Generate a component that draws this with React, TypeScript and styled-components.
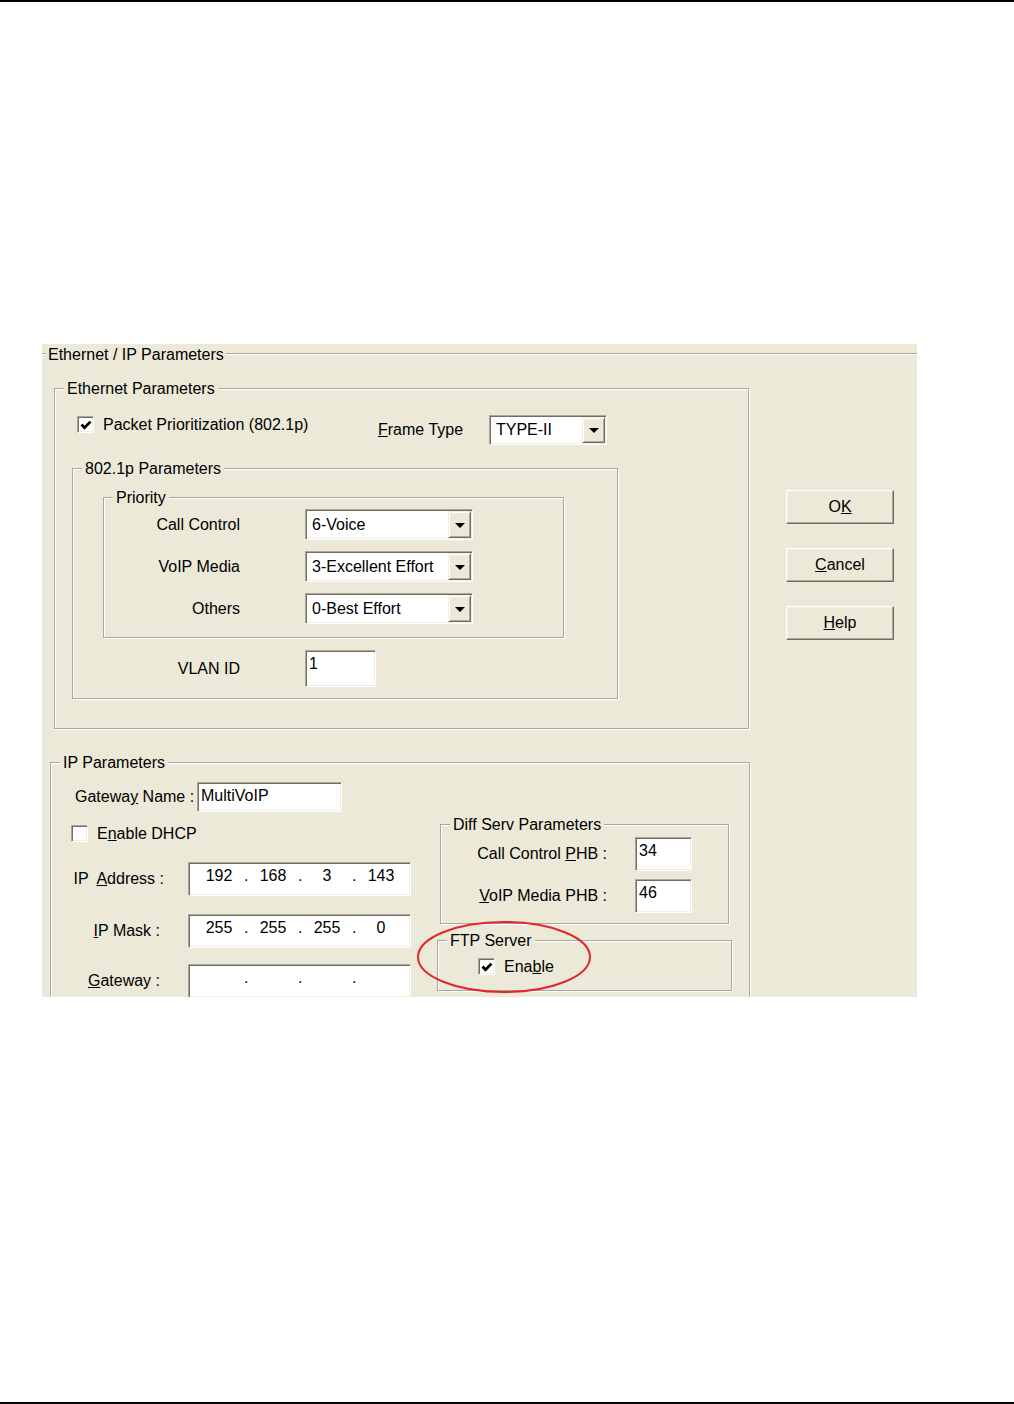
import React from 'react';
import styled, { createGlobalStyle } from 'styled-components';

// classic 3D control palette
const face = '#ECE9D8';
const shadow = '#ACA899';
const darkShadow = '#716F64';
const light = '#F1EFE2';

const GlobalStyle = createGlobalStyle`
  html, body {
    margin: 0;
    padding: 0;
    background: #fff;
  }
  body {
    font-family: "Liberation Sans", Arial, sans-serif;
  }
`;

const Page = styled.div`
  box-sizing: border-box;
  height: 1404px;
  border-top: 2px solid #000;
  border-bottom: 2px solid #000;
  padding: 342px 0 0 42px;
`;

const Dialog = styled.div`
  position: relative;
  width: 875px;
  height: 653px;
  overflow: hidden;
  background: ${face};
  color: #000;
  font: 16px/18px "Liberation Sans", Arial, sans-serif;
`;

/* etched group box */
const Group = styled.div`
  position: relative;
  box-sizing: border-box;
  border: 1px solid ${shadow};
  box-shadow: inset 1px 1px 0 #fff, 1px 1px 0 #fff;
`;

const Title = styled.span`
  position: absolute;
  top: -9px;
  left: 9px;
  padding: 0 3px;
  background: ${face};
  line-height: 18px;
  white-space: nowrap;
`;

const OuterTitle = styled(Title)`
  top: -8px;
  left: 13px;
  padding: 0 2px;
`;

const OuterGroup = styled(Group)`
  display: flex;
  align-items: flex-start;
  width: 940px;
  height: 720px;
  margin: 9px 0 0 -10px;
`;

const LeftCol = styled.div`
  display: flex;
  flex-direction: column;
  align-items: flex-start;
`;

const EthernetGroup = styled(Group)`
  width: 695px;
  height: 341px;
  margin: 34px 0 0 21px;
`;

const PacketRow = styled.div`
  display: flex;
  align-items: flex-start;
  margin-top: 26px;
`;

const CheckField = styled.label`
  box-sizing: border-box;
  display: flex;
  align-items: center;
  gap: 9px;
  line-height: 17px;
  white-space: nowrap;
`;

const PacketCheck = styled(CheckField)`
  width: 301px;
  margin: 1px 0 0 22px;
`;

const DhcpCheck = styled(CheckField)`
  margin: 13px 0 0 20px;
`;

const FtpCheck = styled(CheckField)`
  margin: 17px 0 0 40px;
`;

const Box = styled.span`
  box-sizing: border-box;
  flex: none;
  display: flex;
  align-items: center;
  justify-content: center;
  width: 17px;
  height: 17px;
  border: 1px solid;
  border-color: ${shadow} #fff #fff ${shadow};
  box-shadow: inset 1px 1px 0 ${darkShadow}, inset -1px -1px 0 ${light};
  background: #fff;
`;

const InlineField = styled.div`
  display: flex;
  align-items: center;
`;

const FieldLabel = styled.span<{ $w: number; $right?: boolean; $pr?: number }>`
  box-sizing: border-box;
  flex: none;
  width: ${(p) => p.$w}px;
  padding-right: ${(p) => p.$pr ?? 0}px;
  text-align: ${(p) => (p.$right ? 'right' : 'left')};
  white-space: pre;
`;

const Sunken = styled.div<{ $w: number; $h: number }>`
  box-sizing: border-box;
  flex: none;
  width: ${(p) => p.$w}px;
  height: ${(p) => p.$h}px;
  border: 1px solid;
  border-color: ${shadow} #fff #fff ${shadow};
  box-shadow: inset 1px 1px 0 ${darkShadow}, inset -1px -1px 0 ${light};
  background: #fff;
`;

const Combo = styled(Sunken)`
  display: flex;
  padding: 1px;
`;

const ComboText = styled.span`
  flex: 1;
  display: flex;
  align-items: center;
  padding-left: 5px;
  white-space: nowrap;
  overflow: hidden;
`;

const DropButton = styled.span`
  box-sizing: border-box;
  flex: none;
  display: flex;
  align-items: center;
  justify-content: center;
  width: 23px;
  border: 1px solid;
  border-color: ${light} ${darkShadow} ${darkShadow} ${light};
  box-shadow: inset 1px 1px 0 #fff, inset -1px -1px 0 ${shadow};
  background: ${face};

  &::after {
    content: '';
    border-left: 5px solid transparent;
    border-right: 5px solid transparent;
    border-top: 5px solid #000;
    margin-top: 1px;
  }
`;

const TextBox = styled(Sunken)`
  padding: 3px 3px 0;
  line-height: 20px;
  white-space: nowrap;
  overflow: hidden;
`;

const IpBox = styled(Sunken)`
  display: flex;
  padding: 3px 0 0 5px;
  line-height: 20px;
`;

const Octet = styled.span`
  width: 50px;
  text-align: center;
`;

const Dot = styled.span`
  width: 4px;
  text-align: center;
`;

const Group8021p = styled(Group)`
  width: 546px;
  height: 231px;
  margin: 23px 0 0 17px;
`;

const PriorityGroup = styled(Group)`
  display: flex;
  flex-direction: column;
  gap: 11px;
  width: 461px;
  height: 141px;
  margin: 28px 0 0 30px;
  padding-top: 11px;
`;

const PriorityRow = styled.div`
  display: flex;
  align-items: center;
  gap: 65px;
  height: 31px;
`;

const VlanRow = styled(PriorityRow)`
  height: auto;
  margin: 12px 0 0 31px;
`;

const IPGroup = styled(Group)`
  width: 700px;
  height: 260px;
  margin: 33px 0 0 17px;
`;

const GatewayNameRow = styled(InlineField)`
  margin: 19px 0 0 24px;
`;

const IPColumns = styled.div`
  display: flex;
  align-items: flex-start;
`;

const LeftFields = styled.div`
  display: flex;
  flex-direction: column;
  align-items: flex-start;
  width: 386px;
`;

const AddrRow = styled(InlineField)<{ $mt: number }>`
  margin-top: ${(p) => p.$mt}px;
`;

const RightBoxes = styled.div`
  display: flex;
  flex-direction: column;
  align-items: flex-start;
`;

const DiffServGroup = styled(Group)`
  display: flex;
  flex-direction: column;
  gap: 8px;
  width: 289px;
  height: 100px;
  margin: 12px 0 0 3px;
  padding-top: 12px;
`;

const PhbRow = styled(InlineField)`
  gap: 28px;
`;

const FtpGroup = styled(Group)`
  width: 295px;
  height: 51px;
  margin-top: 16px;
`;

const ButtonCol = styled.div`
  display: flex;
  flex-direction: column;
  gap: 24px;
  margin: 136px 0 0 36px;
`;

const PushButton = styled.button`
  box-sizing: border-box;
  width: 108px;
  height: 34px;
  padding: 0;
  border: 1px solid;
  border-color: #fff ${darkShadow} ${darkShadow} #fff;
  box-shadow: inset -1px -1px 0 ${shadow}, inset 1px 1px 0 ${light};
  background: ${face};
  color: #000;
  font: inherit;
`;

const Highlight = styled.svg`
  position: absolute;
  left: 374px;
  top: 576px;
  overflow: visible;
  pointer-events: none;
`;

const CheckBox = ({ checked }: { checked?: boolean }) => (
  <Box>
    {checked && (
      <svg width="12" height="12" viewBox="0 0 12 12">
        <polyline points="1.5,5.5 4.5,8.8 10.5,2.6" fill="none" stroke="#000" strokeWidth="2.8" />
      </svg>
    )}
  </Box>
);

const Select = ({ w, h, value }: { w: number; h: number; value: string }) => (
  <Combo $w={w} $h={h}>
    <ComboText>{value}</ComboText>
    <DropButton />
  </Combo>
);

const IpField = ({ octets }: { octets: string[] }) => (
  <IpBox $w={223} $h={34}>
    {octets.map((o, i) => (
      <React.Fragment key={i}>
        <Octet>{o}</Octet>
        {i < 3 && <Dot>.</Dot>}
      </React.Fragment>
    ))}
  </IpBox>
);

const priorities = [
  { label: 'Call Control', value: '6-Voice' },
  { label: 'VoIP Media', value: '3-Excellent Effort' },
  { label: 'Others', value: '0-Best Effort' },
];

export default function App() {
  return (
    <>
      <GlobalStyle />
      <Page>
        <Dialog>
          <OuterGroup>
            <OuterTitle>Ethernet / IP Parameters</OuterTitle>
            <LeftCol>
              <EthernetGroup>
                <Title>Ethernet Parameters</Title>
                <PacketRow>
                  <PacketCheck>
                    <CheckBox checked />
                    Packet Prioritization (802.1p)
                  </PacketCheck>
                  <InlineField>
                    <FieldLabel $w={111}>
                      <u>F</u>rame Type
                    </FieldLabel>
                    <Select w={118} h={30} value="TYPE-II" />
                  </InlineField>
                </PacketRow>
                <Group8021p>
                  <Title>802.1p Parameters</Title>
                  <PriorityGroup>
                    <Title>Priority</Title>
                    {priorities.map((p) => (
                      <PriorityRow key={p.label}>
                        <FieldLabel $w={136} $right>
                          {p.label}
                        </FieldLabel>
                        <Select w={168} h={31} value={p.value} />
                      </PriorityRow>
                    ))}
                  </PriorityGroup>
                  <VlanRow>
                    <FieldLabel $w={136} $right>
                      VLAN ID
                    </FieldLabel>
                    <TextBox $w={71} $h={37}>1</TextBox>
                  </VlanRow>
                </Group8021p>
              </EthernetGroup>

              <IPGroup>
                <Title>IP Parameters</Title>
                <GatewayNameRow>
                  <FieldLabel $w={122}>
                    Gatewa<u>y</u> Name :
                  </FieldLabel>
                  <TextBox $w={145} $h={30}>MultiVoIP</TextBox>
                </GatewayNameRow>
                <IPColumns>
                  <LeftFields>
                    <DhcpCheck>
                      <CheckBox />
                      <span>
                        E<u>n</u>able DHCP
                      </span>
                    </DhcpCheck>
                    <AddrRow $mt={20}>
                      <FieldLabel $w={137} $right $pr={24}>
                        IP  <u>A</u>ddress :
                      </FieldLabel>
                      <IpField octets={['192', '168', '3', '143']} />
                    </AddrRow>
                    <AddrRow $mt={18}>
                      <FieldLabel $w={137} $right $pr={28}>
                        <u>I</u>P Mask :
                      </FieldLabel>
                      <IpField octets={['255', '255', '255', '0']} />
                    </AddrRow>
                    <AddrRow $mt={16}>
                      <FieldLabel $w={137} $right $pr={28}>
                        <u>G</u>ateway :
                      </FieldLabel>
                      <IpField octets={['', '', '', '']} />
                    </AddrRow>
                  </LeftFields>
                  <RightBoxes>
                    <DiffServGroup>
                      <Title>Diff Serv Parameters</Title>
                      <PhbRow>
                        <FieldLabel $w={166} $right>
                          Call Control <u>P</u>HB :
                        </FieldLabel>
                        <TextBox $w={57} $h={34}>34</TextBox>
                      </PhbRow>
                      <PhbRow>
                        <FieldLabel $w={166} $right>
                          <u>V</u>oIP Media PHB :
                        </FieldLabel>
                        <TextBox $w={57} $h={34}>46</TextBox>
                      </PhbRow>
                    </DiffServGroup>
                    <FtpGroup>
                      <Title>FTP Server</Title>
                      <FtpCheck>
                        <CheckBox checked />
                        <span>
                          Ena<u>b</u>le
                        </span>
                      </FtpCheck>
                    </FtpGroup>
                  </RightBoxes>
                </IPColumns>
              </IPGroup>
            </LeftCol>

            <ButtonCol>
              <PushButton>
                O<u>K</u>
              </PushButton>
              <PushButton>
                <u>C</u>ancel
              </PushButton>
              <PushButton>
                <u>H</u>elp
              </PushButton>
            </ButtonCol>
          </OuterGroup>

          <Highlight width="176" height="74" viewBox="0 0 176 74">
            <ellipse cx="88" cy="37" rx="86" ry="35" fill="none" stroke="#E3262B" strokeWidth="2" />
          </Highlight>
        </Dialog>
      </Page>
    </>
  );
}
